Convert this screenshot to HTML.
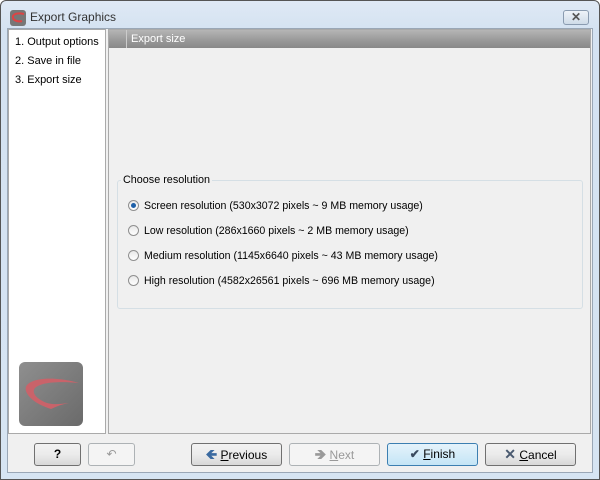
<!DOCTYPE html>
<html><head><style>
*{box-sizing:border-box;margin:0;padding:0}
body{width:600px;height:480px;overflow:hidden;font-family:"Liberation Sans",sans-serif;font-size:10.6px;color:#000;background:#fff}
.win{position:absolute;left:0;top:0;width:600px;height:480px;background:linear-gradient(#dfe9f5,#d4e2f1 30px,#d6e4f2);border:1px solid #555;border-radius:6px 6px 0 0}
.title{position:absolute;left:30px;top:10px;font-size:12px;color:#333}
.close{position:absolute;left:563px;top:10px;width:26px;height:15px;border:1px solid #8a9bb0;border-radius:3px;background:linear-gradient(#eef3f9,#cfdbe8);text-align:center;font-size:12px;line-height:13px;color:#555;font-weight:bold}
.inner{position:absolute;left:7px;top:28px;width:586px;height:445px;background:#f0f0f0;border:1px solid #9aa7b6}
.left{position:absolute;left:8px;top:29px;width:98px;height:405px;background:#fff;border:1px solid #aaa}
.left div{position:absolute;left:6px;font-size:11px}
.right{position:absolute;left:108px;top:29px;width:483px;height:405px;background:#f0f0f0;border:1px solid #aaa}
.hdr{position:absolute;left:0;top:0;width:100%;height:18px;background:linear-gradient(#b5b5b5,#9a9a9a 55%,#888);color:#fff;padding-left:22px;line-height:18px;font-size:11px}
.hdr:before{content:"";position:absolute;left:17px;top:0;width:1px;height:18px;background:#ccc}
.grp{position:absolute;left:117px;top:180px;width:466px;height:129px;border:1px solid #d5dfe5;border-radius:3px}
.gl{position:absolute;left:121px;top:174px;background:#f0f0f0;padding:0 2px;font-size:10.8px}
.r{position:absolute;left:128px;font-size:10.6px}
.r i{display:inline-block;width:11px;height:11px;border:1px solid #8f8f8f;border-radius:50%;background:linear-gradient(#e8e8e8,#fff);vertical-align:-2px;margin-right:5px;position:relative}
.r i.on:after{content:"";position:absolute;left:2px;top:2px;width:5px;height:5px;border-radius:50%;background:#1d5fa8}
.btn{position:absolute;top:443px;height:23px;border:1px solid #707070;border-radius:3px;background:linear-gradient(#f2f2f2,#ebebeb 50%,#d8d8d8);text-align:center;line-height:21px;font-size:12px}
.dis{border-color:#adb2b5;color:#999;background:#f4f4f4}
.logo{position:absolute;left:19px;top:362px;width:64px;height:64px;border-radius:6px;background:linear-gradient(135deg,#8f8f8f,#6a6a6a)}
</style></head><body>
<div class="win"></div>
<svg style="position:absolute;left:10px;top:10px" width="16" height="16"><rect width="16" height="16" rx="3" fill="#777"/><path d="M14 4 C6 2 2 5 3 8 C4 11 9 12 12 11" stroke="#d44" stroke-width="2" fill="none"/></svg>
<div class="title">Export Graphics</div>
<div class="close">✕</div>
<div class="inner"></div>
<div class="left">
<div style="top:6px">1. Output options</div>
<div style="top:25px">2. Save in file</div>
<div style="top:44px">3. Export size</div>
</div>
<div class="logo"><svg width="64" height="64"><path d="M60 21 C35 14 14 16 8 23 C3 29 12 41 32 47 C38 44 44 42 50 41 C42 42 35 43 28 41 C18 37 12 31 16 26 C22 20 40 19 60 21Z" fill="#c9636a"/></svg></div>
<div class="right"><div class="hdr">Export size</div></div>
<div class="grp"></div>
<div class="gl">Choose resolution</div>
<div class="r" style="top:200px"><i class="on"></i>Screen resolution (530x3072 pixels ~ 9 MB memory usage)</div>
<div class="r" style="top:225px"><i></i>Low resolution (286x1660 pixels ~ 2 MB memory usage)</div>
<div class="r" style="top:250px"><i></i>Medium resolution (1145x6640 pixels ~ 43 MB memory usage)</div>
<div class="r" style="top:275px"><i></i>High resolution (4582x26561 pixels ~ 696 MB memory usage)</div>
<div class="btn" style="left:34px;width:47px;font-weight:bold">?</div>
<div class="btn dis" style="left:88px;width:47px">↶</div>
<div class="btn" style="left:191px;width:91px"><span style="color:#3b6aa0;font-weight:bold;font-size:14px">🡸</span> <u>P</u>revious</div>
<div class="btn dis" style="left:289px;width:91px"><span style="font-weight:bold;font-size:14px">🡺</span> <u>N</u>ext</div>
<div class="btn" style="left:387px;width:91px;border-color:#3c7fb1;background:linear-gradient(#e5f3fb,#c4e5f6)"><span style="color:#3a4a5e;font-weight:bold">✔</span> <u>F</u>inish</div>
<div class="btn" style="left:485px;width:91px"><span style="color:#4a5a70;font-weight:bold;font-size:14px">✕</span> <u>C</u>ancel</div>
</body></html>
